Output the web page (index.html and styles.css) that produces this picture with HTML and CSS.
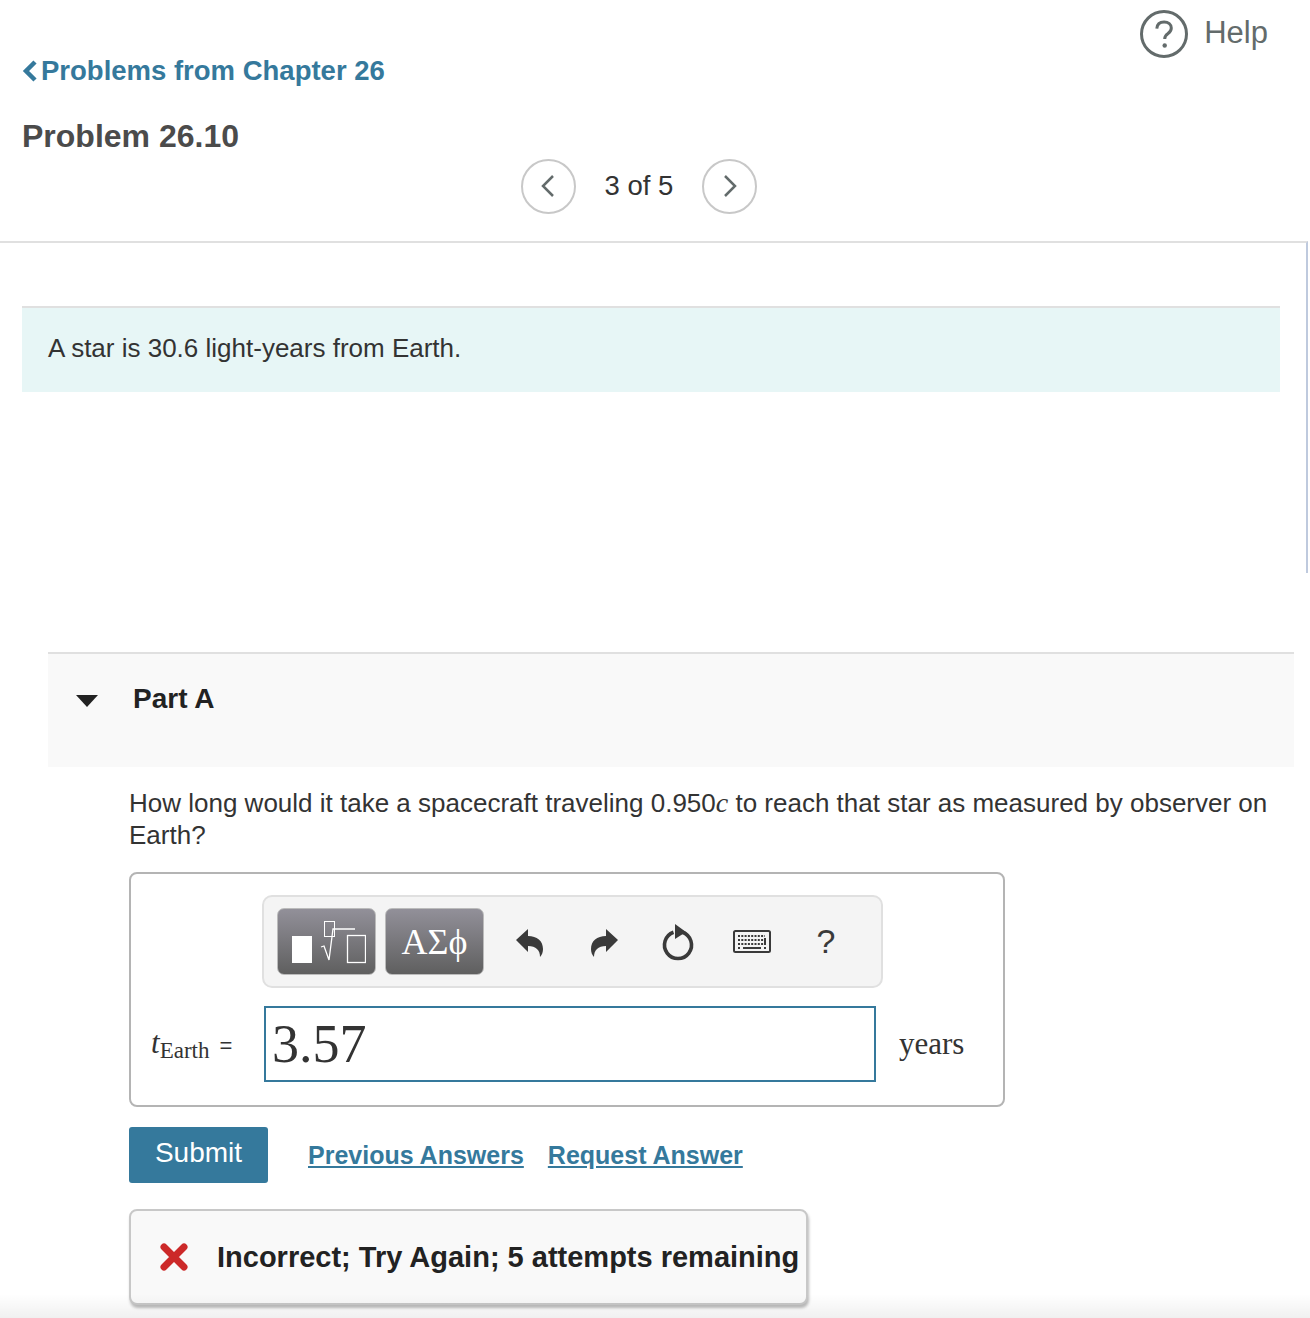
FILE: index.html
```html
<!DOCTYPE html>
<html>
<head>
    <meta charset="utf-8">
    <title>Problem 26.10</title>
    <link rel="stylesheet" href="styles.css">
</head>
<body>

<!-- Help -->
<div class="help-row">
    <a class="help-link" href="#">
        <svg class="help-icon" width="48" height="48" viewBox="0 0 48 48">
            <circle cx="24" cy="24" r="22.5" fill="none" stroke="#636b6b" stroke-width="3"/>
            <path d="M16.8 18.6c.3-4.300 3.200-6.600 7.300-6.600 4.200 0 7.200 2.500 7.200 6.100 0 2.700-1.400 4.200-3.500 5.700-2.200 1.500-3.100 2.500-3.100 5.200" fill="none" stroke="#636b6b" stroke-width="3"/>
            <circle cx="24.700" cy="35.500" r="2.200" fill="#636b6b"/>
        </svg>
        <span>Help</span>
    </a>
</div>

<!-- Title -->
<a class="back-link" href="#">
    <svg width="16" height="24" viewBox="0 0 16 24"><path d="M13 3 4 12l9 9" fill="none" stroke="#35799c" stroke-width="4.500"/></svg>
    <span>Problems from Chapter 26</span>
</a>
<h1 class="problem-title">Problem 26.10</h1>

<!-- Pager -->
<div class="pager">
    <button class="pager-btn" type="button">
        <svg width="16" height="24" viewBox="0 0 16 24"><path d="M13 2 3 12l10 10" fill="none" stroke="#636b6b" stroke-width="2.500"/></svg>
    </button>
    <span class="pager-text">3 of 5</span>
    <button class="pager-btn" type="button">
        <svg width="16" height="24" viewBox="0 0 16 24"><path d="m3 2 10 10L3 22" fill="none" stroke="#636b6b" stroke-width="2.500"/></svg>
    </button>
</div>

<!-- Intro -->
<div class="intro-pane">
    <div class="intro-box">A star is 30.6 light-years from Earth.</div>
</div>

<!-- Part A -->
<div class="part">
    <div class="part-head">
        <span class="part-arrow"></span>
        <span class="part-title">Part A</span>
    </div>
    <div class="part-body">
        <p class="question">How long would it take a spacecraft traveling 0.950<i class="math-c">c</i> to reach that star as measured by observer on Earth?</p>

        <div class="answer-box">
            <div class="toolbar">
                <button class="tool-btn tool-templates" type="button">
                    <svg width="78" height="46" viewBox="0 0 78 46">
                        <rect x="4" y="17" width="20" height="27" fill="#fff"/>
                        <rect x="36.500" y="2.500" width="10" height="15" fill="none" stroke="#fff"/>
                        <path d="M33 28l3-1 5 14 4-31h22" fill="none" stroke="#fff" stroke-width="1.300"/>
                        <rect x="59.500" y="16.500" width="18" height="27" fill="none" stroke="#fff" stroke-width="1.300"/>
                    </svg>
                </button>
                <button class="tool-btn tool-greek" type="button">ΑΣϕ</button>
                <span class="tool-icon">
                    <svg width="30" height="32" viewBox="0 0 30 32"><path d="M1 14 13 3v7c9 0 15 5 15 13 0 3-1 6-3 8 0-7-4-11-12-11v6z" fill="#3a3a3a"/></svg>
                </span>
                <span class="tool-icon">
                    <svg width="30" height="32" viewBox="0 0 30 32"><path d="M29 14 17 3v7C8 10 2 15 2 23c0 3 1 6 3 8 0-7 4-11 12-11v6z" fill="#3a3a3a"/></svg>
                </span>
                <span class="tool-icon">
                    <svg width="34" height="38" viewBox="0 0 34 38"><path d="M21.500 9.300a13.500 13.500 0 1 1-9 0" fill="none" stroke="#3a3a3a" stroke-width="3.600"/><path d="M14 1l11 8-11 7z" fill="#3a3a3a"/></svg>
                </span>
                <span class="tool-icon">
                    <svg width="38" height="24" viewBox="0 0 38 24">
                        <rect x="1" y="1" width="36" height="21" rx="1.500" fill="#f4f4f4" stroke="#3a3a3a" stroke-width="2"/>
                        <path d="M5 6h27M5 10h26M5 14h26" stroke="#3a3a3a" stroke-width="2" stroke-dasharray="2 1.300"/>
                        <path d="M10 18h18M5 18h2M31 18h2M32 8v7" stroke="#3a3a3a" stroke-width="2"/>
                    </svg>
                </span>
                <span class="tool-icon tool-help">?</span>
            </div>

            <div class="answer-row">
                <span class="answer-label"><i>t</i><sub>Earth</sub><span class="equals">=</span></span>
                <input class="answer-input" type="text" value="3.57">
                <span class="answer-unit">years</span>
            </div>
        </div>

        <div class="actions">
            <button class="submit-btn" type="button">Submit</button>
            <a class="action-link" href="#">Previous Answers</a>
            <a class="action-link" href="#">Request Answer</a>
        </div>

        <div class="feedback">
            <svg width="30" height="30" viewBox="0 0 30 30"><path d="M5 5l20 20M25 5 5 25" stroke="#cc2929" stroke-width="7" stroke-linecap="round"/></svg>
            <span>Incorrect; Try Again; 5 attempts remaining</span>
        </div>
    </div>
</div>

<div class="bottom-fade"></div>

</body>
</html>
```

FILE: styles.css
```css
/* Page */
html, body {
    height: 1318px;
    overflow: hidden;
}

body {
    margin: 0;
    position: relative;
    background-color: white;
    color: #333;
    font-family: 'Liberation Sans', Arial, sans-serif;
    font-size: 26px;
}

/* Help link */
.help-row {
    display: flex;
    justify-content: flex-end;
    height: 51px;
    padding: 10px 42px 0 0;
    box-sizing: border-box;
}

.help-link {
    display: flex;
    align-items: flex-start;
    gap: 16px;
    color: #636b6b;
    font-size: 31px;
    line-height: 46px;
    text-decoration: none;
}

/* Title */
.back-link {
    display: flex;
    align-items: center;
    gap: 3px;
    height: 40px;
    margin-left: 22px;
    color: #35799c;
    font-size: 27.500px;
    font-weight: bold;
    text-decoration: none;
}

.problem-title {
    margin: 22px 0 0 22px;
    color: #4b4b4b;
    font-size: 32px;
    line-height: 46px;
    font-weight: bold;
}

/* Pager */
.pager {
    display: flex;
    align-items: center;
    justify-content: center;
    gap: 29px;
    width: 1278px;
    margin-top: -1px;
    height: 56px;
}

.pager-btn {
    display: flex;
    align-items: center;
    justify-content: center;
    width: 55px;
    height: 55px;
    padding: 0;
    background: white;
    border: 2px solid #c8c8c8;
    border-radius: 50%;
}

.pager-text {
    color: #333;
    font-size: 27.500px;
}

/* Intro */
.intro-pane {
    box-sizing: border-box;
    width: 1308px;
    height: 332px;
    margin-top: 27px;
    padding: 63px 26px 0 22px;
    border-top: 2px solid #e0e0e0;
    border-right: 2px solid #bfcade;
}

.intro-box {
    height: 84px;
    padding-left: 26px;
    background-color: #e7f6f6;
    border-top: 2px solid #e0e0e0;
    line-height: 80px;
}

/* Part */
.part {
    margin: 79px 16px 0 48px;
}

.part-head {
    display: flex;
    align-items: flex-start;
    height: 113px;
    padding-left: 28px;
    background-color: #f9f9f9;
    border-top: 2px solid #e0e0e0;
}

.part-arrow {
    width: 0;
    height: 0;
    margin-top: 41px;
    border-left: 11px solid transparent;
    border-right: 11px solid transparent;
    border-top: 12px solid #222;
}

.part-title {
    margin: 28px 0 0 35px;
    color: #222;
    font-size: 28px;
    font-weight: bold;
    line-height: 34px;
}

.part-body {
    padding: 20px 0 0 81px;
}

.question {
    margin: 0;
    color: #333;
    line-height: 32px;
}

.math-c {
    font-family: 'Liberation Serif', serif;
    font-size: 28px;
}

/* Answer box */
.answer-box {
    box-sizing: border-box;
    width: 876px;
    height: 235px;
    margin-top: 21px;
    padding: 21px 0 0 131px;
    border: 2px solid #b4b4b4;
    border-radius: 8px;
}

.toolbar {
    display: flex;
    align-items: center;
    box-sizing: border-box;
    width: 621px;
    height: 93px;
    padding-left: 13px;
    background-color: #f4f4f4;
    border: 2px solid #e0e0e0;
    border-radius: 10px;
}

.tool-btn {
    display: flex;
    align-items: center;
    justify-content: center;
    height: 67px;
    margin-right: 9px;
    padding: 0;
    background: linear-gradient(#929099, #5f5f5f);
    border: 1px solid #bbb;
    border-radius: 7px;
    color: white;
}

.tool-templates {
    width: 99px;
}

.tool-greek {
    width: 99px;
    font-family: 'Liberation Serif', serif;
    font-size: 36px;
}

.tool-icon {
    display: flex;
    justify-content: center;
    width: 74px;
    color: #3a3a3a;
}

.tool-help {
    font-size: 34px;
}

.answer-row {
    display: flex;
    align-items: center;
    margin: 18px 0 0 -111px;
}

.answer-label {
    width: 113px;
    color: #333;
    font-family: 'Liberation Serif', serif;
    font-size: 31px;
    white-space: nowrap;
}

.answer-label sub {
    font-size: 23px;
    vertical-align: -5px;
}

.equals {
    margin-left: 10px;
    font-family: 'Liberation Sans', sans-serif;
    font-size: 22px;
}

.answer-input {
    box-sizing: border-box;
    width: 612px;
    height: 76px;
    padding: 0 6px;
    border: 2px solid #35799c;
    border-radius: 0;
    color: #333;
    font-family: 'Liberation Serif', serif;
    font-size: 54px;
}

.answer-unit {
    margin-left: 23px;
    color: #333;
    font-family: 'Liberation Serif', serif;
    font-size: 31px;
}

/* Actions */
.actions {
    display: flex;
    align-items: center;
    margin-top: 20px;
}

.submit-btn {
    width: 139px;
    height: 56px;
    margin-right: 40px;
    padding: 0 0 5px 0;
    background-color: #35799c;
    border: none;
    border-radius: 3px;
    color: white;
    font-family: 'Liberation Sans', sans-serif;
    font-size: 28px;
}

.action-link {
    margin-right: 24px;
    color: #35799c;
    font-size: 25px;
    font-weight: bold;
}

/* Feedback */
.feedback {
    display: flex;
    align-items: center;
    gap: 28px;
    box-sizing: border-box;
    width: 679px;
    height: 96px;
    margin-top: 26px;
    padding-left: 28px;
    background-color: #f9f9f9;
    border: 2px solid #c8c8c8;
    border-radius: 8px;
    box-shadow: 1px 3px 3px #bbb;
    color: #222;
    font-size: 29px;
    font-weight: bold;
}

/* Grey fade on the bottom edge */
.bottom-fade {
    position: absolute;
    left: 0;
    right: 0;
    bottom: 0;
    height: 24px;
    background: linear-gradient(to bottom, rgba(0, 0, 0, 0), rgba(0, 0, 0, 0.06));
    pointer-events: none;
}
```
